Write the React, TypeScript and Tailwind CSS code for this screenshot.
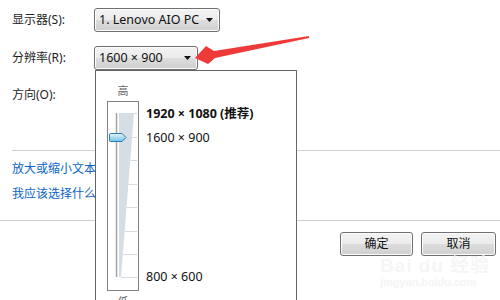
import React from "react";

const FONT = '"Segoe UI", "Noto Sans", "Noto Sans CJK SC", sans-serif';

function ComboButton({ label, width }: { label: string; width: string }) {
  return (
    <div
      className={`${width} h-[24px] flex items-center justify-between pl-[4px] pr-[6px] rounded-[3px] border border-[#707070] text-[12.5px] text-[#111] bg-[linear-gradient(to_bottom,#f3f3f3_0%,#ebebeb_50%,#dddddd_51%,#cfcfcf_100%)] shadow-[inset_0_0_0_1px_#fcfcfc]`}
    >
      <span className="leading-none">{label}</span>
      <svg width="7" height="4" viewBox="0 0 7 4">
        <polygon points="0,0 7,0 3.5,4" fill="#111" />
      </svg>
    </div>
  );
}

function PushButton({ label, width }: { label: string; width: string }) {
  return (
    <div
      className={`${width} h-[24px] flex items-center justify-center rounded-[3px] border border-[#707070] text-[12px] text-[#111] bg-[linear-gradient(to_bottom,#f3f3f3_0%,#ebebeb_50%,#dddddd_51%,#cfcfcf_100%)] shadow-[inset_0_0_0_1px_#fcfcfc]`}
    >
      {label}
    </div>
  );
}

function Slider() {
  const ticks = [113, 137, 160, 184, 207, 231, 254, 277];
  return (
    <svg width="32" height="190" viewBox="107 101 32 190">
      <defs>
        <linearGradient id="thumb" x1="0" y1="0" x2="0" y2="1">
          <stop offset="0" stopColor="#e4f6fd" />
          <stop offset="0.5" stopColor="#a9ddf4" />
          <stop offset="1" stopColor="#6cc4ec" />
        </linearGradient>
      </defs>
      <rect x="107.5" y="101.5" width="31" height="189" fill="none" stroke="#000" strokeWidth="1" strokeDasharray="1 1" />
      <polygon points="119,113 134,113 121,277 119,277" fill="#d5dde5" />
      {ticks.map((y) => (
        <line key={y} x1={121 + ((277 - y) / 164) * 13} y1={y + 0.5} x2="137" y2={y + 0.5} stroke="#d3dce4" strokeWidth="1" />
      ))}
      <line x1="116.5" y1="113" x2="116.5" y2="277" stroke="#a3a3a3" strokeWidth="1.5" />
      <path
        d="M110.5,133.5 L122,133.5 L126,137.5 L122,141.5 L110.5,141.5 Q109.5,141.5 109.5,140.5 L109.5,134.5 Q109.5,133.5 110.5,133.5 Z"
        fill="url(#thumb)"
        stroke="#2f78ae"
        strokeWidth="1"
      />
    </svg>
  );
}

export default function App() {
  return (
    <div className="relative w-[500px] h-[300px] overflow-hidden bg-white" style={{ fontFamily: FONT }}>
      {/* main form */}
      <div className="flex flex-col pt-[8px]">
        <div className="flex items-center h-[24px] pl-[12px]">
          <div className="w-[82px] text-[12px] text-[#1e1e1e]">显示器(S):</div>
          <ComboButton label="1. Lenovo AIO PC" width="w-[126px]" />
        </div>
        <div className="flex items-center h-[24px] mt-[14px] pl-[12px]">
          <div className="w-[82px] text-[12px] text-[#1e1e1e]">分辨率(R):</div>
          <ComboButton label="1600 × 900" width="w-[104px]" />
        </div>
        <div className="flex items-center h-[24px] mt-[13px] pl-[12px]">
          <div className="w-[82px] text-[12px] text-[#1e1e1e]">方向(O):</div>
        </div>
        <div className="ml-[12px] mt-[43px] h-px bg-[#cfcfcf]" />
        <div className="flex flex-col pl-[12px] pt-[10px] gap-[9px] text-[12px] text-[#0a64c8] leading-[16px]">
          <span className="whitespace-nowrap">放大或缩小文本和其他项目</span>
          <span className="whitespace-nowrap">我应该选择什么显示器设置?</span>
        </div>
        <div className="mt-[18px] h-px bg-[#cfcfcf]" />
        <div className="flex justify-end gap-[8px] pr-[4px] mt-[11px]">
          <PushButton label="确定" width="w-[73px]" />
          <PushButton label="取消" width="w-[75px]" />
        </div>
      </div>

      {/* watermark */}
      <div className="absolute left-[380px] top-[256px] flex flex-col items-start pointer-events-none select-none">
        <span className="text-[19px] font-bold leading-[20px] text-[#f6f6f6] tracking-[1px]" style={{ fontFamily: '"Liberation Sans", "Noto Sans CJK SC", sans-serif' }}>
          Bai du 经验
        </span>
        <span className="text-[11px] font-bold leading-[12px] text-[#f5f5f5]" style={{ fontFamily: '"Liberation Sans", sans-serif' }}>
          jingyan.baidu.com
        </span>
      </div>

      {/* dropdown panel */}
      <div className="absolute left-[95px] top-[70px] w-[202px] h-[240px] bg-white border border-[#646464] flex">
        <div className="flex flex-col items-center w-[32px] ml-[11px]">
          <span className="mt-[11px] h-[16px] leading-[16px] text-[11px] text-[#666]" style={{ fontFamily: '"Noto Sans CJK SC", sans-serif' }}>
            高
          </span>
          <div className="mt-[3px]">
            <Slider />
          </div>
          <span className="mt-[2px] h-[16px] leading-[16px] text-[11px] text-[#666]" style={{ fontFamily: '"Noto Sans CJK SC", sans-serif' }}>
            低
          </span>
        </div>
        <div className="flex flex-col ml-[7px] text-[12.5px] leading-[16px] text-[#111] whitespace-nowrap">
          <span className="mt-[35px] font-bold">1920 × 1080 (推荐)</span>
          <span className="mt-[8px]">1600 × 900</span>
          <span className="mt-[123px]">800 × 600</span>
        </div>
      </div>

      {/* red arrow */}
      <svg className="absolute left-0 top-0 pointer-events-none" width="500" height="300" viewBox="0 0 500 300">
        <polygon points="309,36 214,51 206,46 195,58 208,64 215,58 309,38" fill="#ef3a3a" />
      </svg>
    </div>
  );
}
